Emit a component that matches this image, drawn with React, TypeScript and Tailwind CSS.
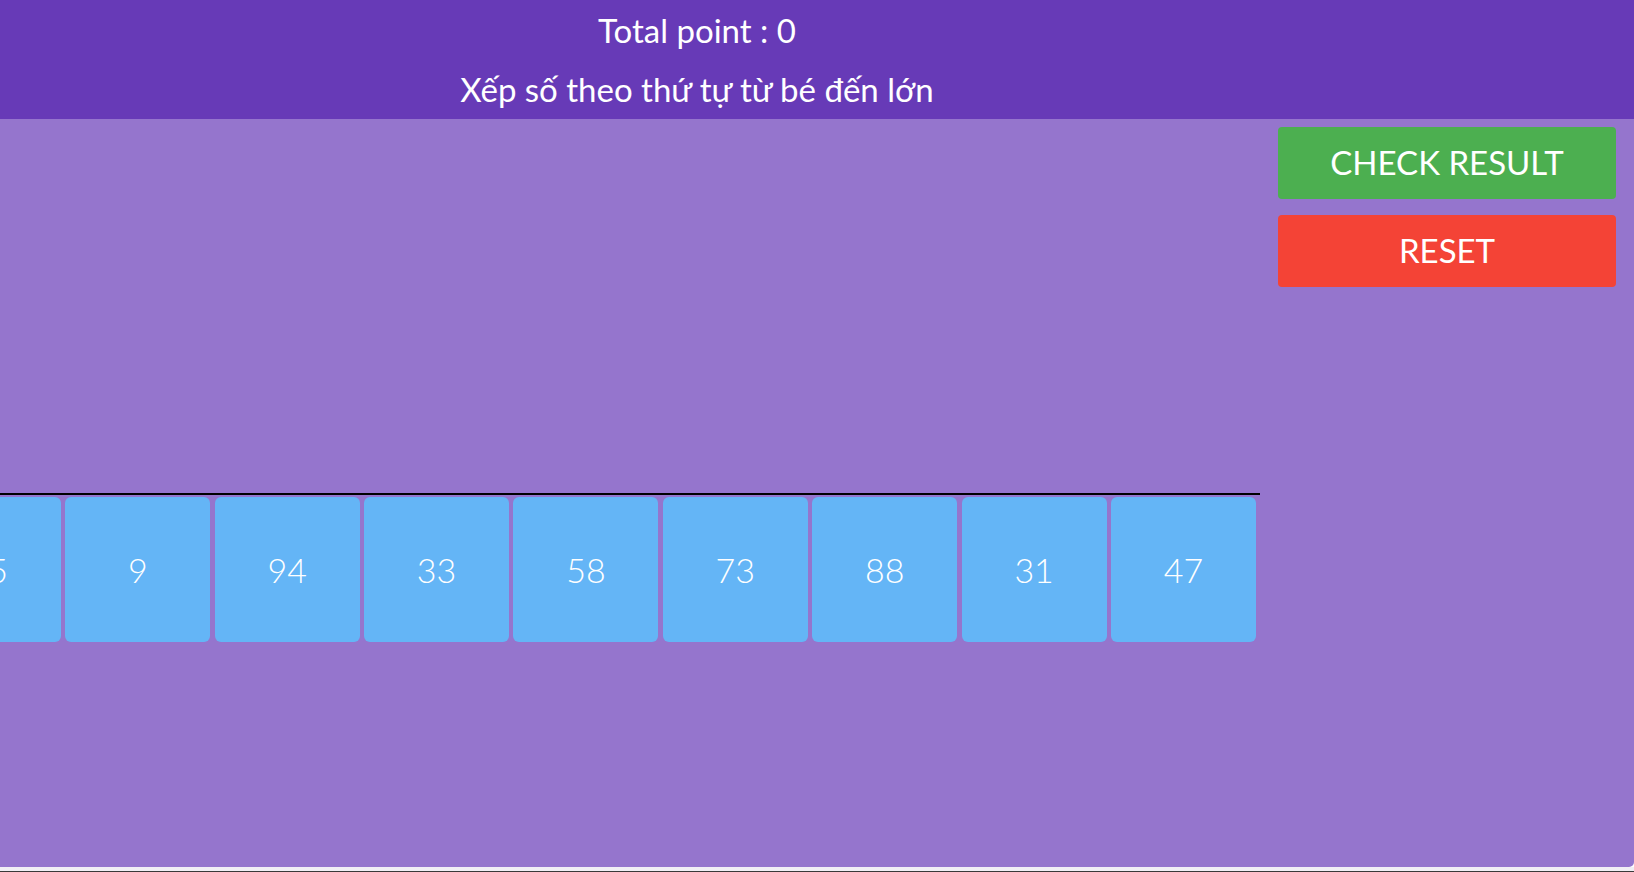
import React from "react";

const numbers = [25, 9, 94, 33, 58, 73, 88, 31, 47];

const NumberCard: React.FC<{ value: number }> = ({ value }) => (
    <div className="w-[145px] h-[145px] shrink-0 rounded-[6px] bg-[#64b5f6] flex items-center justify-center text-white text-[34px] font-light">
        {value}
    </div>
);

export default function App() {
    return (
        <div className="w-[1634px] h-[872px] flex flex-col overflow-hidden font-['Lato',sans-serif]">
            {/* header */}
            <div className="h-[119px] shrink-0 bg-[#673ab7] text-white pr-[240px] flex flex-col items-center text-[33px]">
                <div className="h-[60px] leading-[60px]">Total point : 0</div>
                <div className="h-[59px] leading-[59px]">Xếp số theo thứ tự từ bé đến lớn</div>
            </div>

            {/* board */}
            <div className="flex-1 flex bg-[#9575cd] rounded-br-[5px]">
                <div className="w-[1260px] shrink-0 flex flex-col">
                    <div className="h-[374px]" />
                    <div className="h-[2px] bg-black" />
                    <div className="mt-[2px] pr-[4px] flex justify-end gap-[4.4px] overflow-hidden">
                        {numbers.map((n, i) => (
                            <NumberCard key={i} value={n} />
                        ))}
                    </div>
                </div>
                <div className="flex-1 px-[18px] pt-[8px] flex flex-col gap-[16px]">
                    <button className="h-[72px] rounded-[4px] bg-[#4caf50] text-white text-[33px]">
                        CHECK RESULT
                    </button>
                    <button className="h-[72px] rounded-[4px] bg-[#f44336] text-white text-[33px]">
                        RESET
                    </button>
                </div>
            </div>

            <div className="h-[4px] shrink-0 bg-[#f1eff5]" />
            <div className="h-[1px] shrink-0 bg-[#3a3a3a]" />
        </div>
    );
}
